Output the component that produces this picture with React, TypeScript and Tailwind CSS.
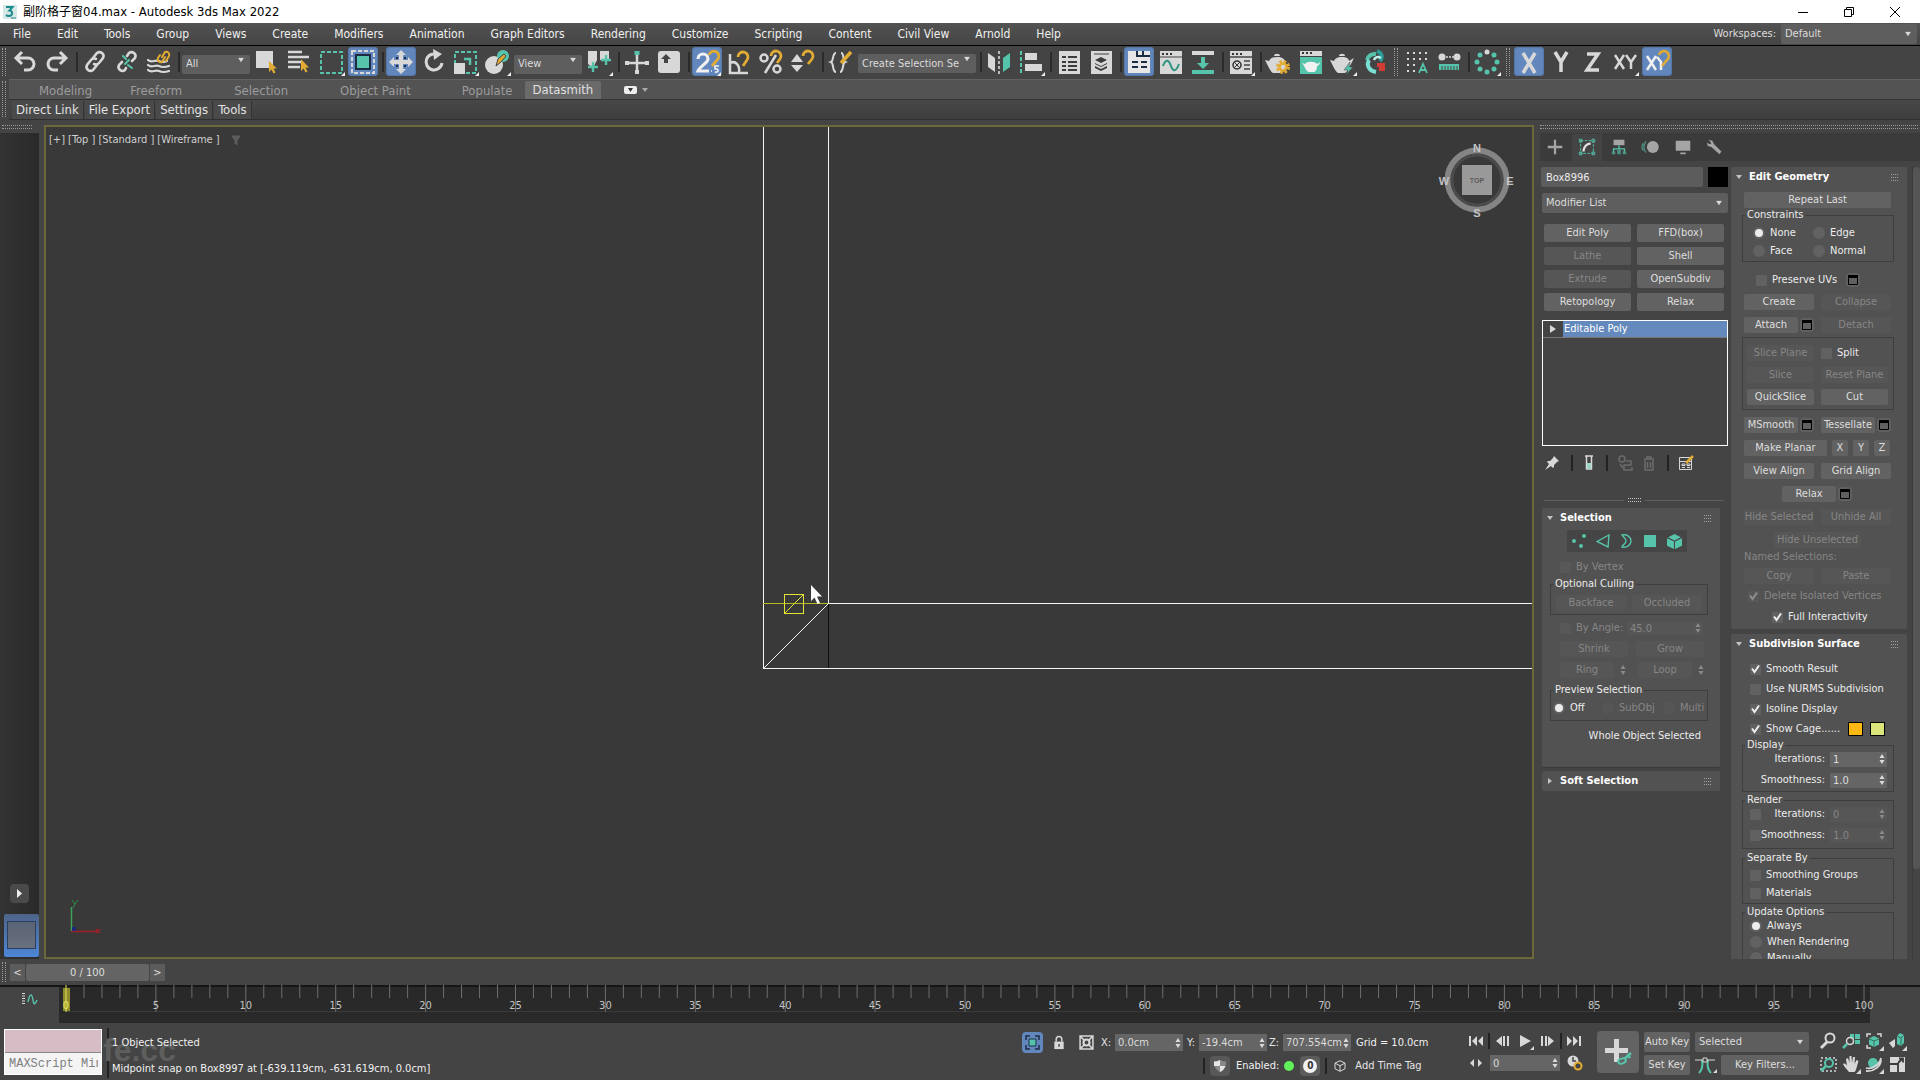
import type { ReactNode } from "react";

const L = "#d8d8d8";
const T = "#56c4ab";
const Y = "#e2ab33";
const B = "#1d2c45";

/* ---------- toolbar icons, drawn on a 30 x 28 grid ---------- */

const icons: Record<string, ReactNode> = {
  undo: <path d="M12 4 6 10l6 6M6.500 10H18a6 6 0 0 1 0 12h-4" fill="none" stroke={L} strokeWidth="3" />,
  redo: <path d="M18 4l6 6-6 6M23.500 10H12a6 6 0 0 0 0 12h4" fill="none" stroke={L} strokeWidth="3" />,
  link: (
    <g fill="none" stroke={L} strokeWidth="2.600" strokeLinecap="round">
      <path d="M13 10l4-5a4 4 0 0 1 6 5l-4 5a4 4 0 0 1-5 1" />
      <path d="M17 17l-4 5a4 4 0 0 1-6-5l4-5a4 4 0 0 1 5-1" />
    </g>
  ),
  unlink: (
    <g fill="none" stroke={L} strokeWidth="2.600" strokeLinecap="round">
      <path d="M15 8l2-3a4 4 0 0 1 6 5l-3 3" />
      <path d="M14 20l-1 2a4 4 0 0 1-6-5l3-3" />
      <path d="M11 8l3 3M16 17l4 3M17 12l-4 4" stroke={T} strokeWidth="2" />
    </g>
  ),
  bind: (
    <g fill="none" strokeLinecap="round">
      <path d="M4 12c4 4 7-1 11 1s6 1 8 0M4 17c4 4 7-1 11 1s7 1 10 0M4 22c4 4 7-1 11 1s7 1 10 0" stroke={L} strokeWidth="2.200" />
      <path d="M18 9l3-5a3 3 0 0 1 4 4l-3 5M21 9l-3 5a3 3 0 0 1-4-4l2-3" stroke={Y} strokeWidth="2" />
    </g>
  ),
  select: (
    <g>
      <path d="M4 3h17v17H4z" fill={L} />
      <path d="M17 13v11l2.500-2.500 2 4 2-1-2-4h3.500z" fill={Y} />
    </g>
  ),
  byname: (
    <g>
      <path d="M4 4h14M4 9h21M4 14h14M4 19h12" stroke={L} strokeWidth="2.600" />
      <path d="M17 11v12l2.500-2.500 2 4 2-1-2-4h3.500z" fill={Y} />
    </g>
  ),
  rect: <path d="M5 4h21v21H5z" fill="none" stroke={T} strokeWidth="2" strokeDasharray="4 2" />,
  window: (
    <g>
      <path d="M4 3h22v22H4z" fill="none" stroke={L} strokeWidth="2" strokeDasharray="4 2" />
      <path d="M8 7h14v14H8z" fill={T} stroke={B} strokeWidth="2" />
    </g>
  ),
  move: (
    <g>
      <path d="M15 2l5 5h-3v5h5V9l5 5-5 5v-3h-5v5h3l-5 5-5-5h3v-5H8v3l-5-5 5-5v3h5V7h-3z" fill={L} />
      <path d="M10 9h2v2h-2zM18 9h2v2h-2zM10 17h2v2h-2zM18 17h2v2h-2z" fill={B} />
    </g>
  ),
  rotate: (
    <g>
      <path d="M20 7a8 8 0 1 0 4 8" fill="none" stroke={L} strokeWidth="3" />
      <path d="M15 1l9 5-8 6z" fill={L} />
    </g>
  ),
  scale: (
    <g>
      <path d="M5 4h21v21H5z" fill="none" stroke={T} strokeWidth="2" strokeDasharray="4 2" />
      <path d="M4 15h11v11H4z" fill={L} />
      <path d="M14 11h6v6" fill="none" stroke={T} strokeWidth="2.500" />
    </g>
  ),
  place: (
    <g>
      <circle cx="12" cy="17" r="9" fill={L} />
      <circle cx="21" cy="8" r="6" fill={T} />
      <path d="M14 18l2-7 6-5 2 2-5 6z" fill={Y} stroke="#444" />
    </g>
  ),
  pivot: (
    <g>
      <path d="M4 3h9v9l-4 8-5-4zM16 3h9v9h-9z" fill={L} />
      <path d="M9 14v10M4 19h10M22 7v10M17 12h10" stroke={T} strokeWidth="2.400" />
    </g>
  ),
  manip: (
    <g>
      <path d="M15 6v19M5 15h20" stroke={L} strokeWidth="2.500" />
      <path d="M3 13h4v4H3zM23 13h4v4h-4zM13 22h4v4h-4z" fill={L} />
      <path d="M12.500 3h5v4h-5z" fill={T} />
    </g>
  ),
  keyb: (
    <g>
      <rect x="4" y="3" width="22" height="22" rx="3" fill={L} />
      <path d="M12 6l5 5h-3v4h-4v-4H7z" fill="#444" />
    </g>
  ),
  snap: (
    <g>
      <path d="M6 11a5 5 0 0 1 10 0c0 4-8 7-10 12h11" fill="none" stroke="#f0f0f0" strokeWidth="3.200" />
      <path d="M17 7a5 5 0 1 1 8 5l-5 6" fill="none" stroke={Y} strokeWidth="2.800" />
      <path d="M27 18h-4v3c4-1 4 4 0 3M19 23h1" fill="none" stroke="#f0f0f0" strokeWidth="1.600" />
    </g>
  ),
  angle: (
    <g fill="none">
      <path d="M6 6v19h18M6 15c6-3 10 3 9 9" stroke={L} strokeWidth="2.500" />
      <path d="M14 9a5 5 0 1 1 9 3l-4 6" stroke={Y} strokeWidth="2.800" />
    </g>
  ),
  percent: (
    <g fill="none">
      <circle cx="8" cy="10" r="3.500" stroke={L} strokeWidth="2.500" />
      <circle cx="21" cy="21" r="3.500" stroke={L} strokeWidth="2.500" />
      <path d="M20 7L9 25" stroke={L} strokeWidth="2.500" />
      <path d="M15 8a5 5 0 1 1 9 3l-3 4" stroke={Y} strokeWidth="2.800" />
    </g>
  ),
  spin: (
    <g>
      <path d="M9 6l6 8H3zM9 24l6-7H3z" fill={L} />
      <path d="M15 8a5 5 0 1 1 9 3l-4 5" fill="none" stroke={Y} strokeWidth="2.800" />
    </g>
  ),
  sets: (
    <g fill="none">
      <path d="M10 5c-4 0-2 8-5 9 3 1 1 10 5 10M15 5c4 0 1 8 4 9-3 1-1 10-5 10" stroke={L} strokeWidth="2" />
      <path d="M25 4L15 15" stroke={Y} strokeWidth="3.500" />
    </g>
  ),
  mirror: (
    <g>
      <path d="M4 5l7 5v14l-7-5z" fill={L} />
      <path d="M26 5l-7 5v14l7-5z" fill={T} />
      <path d="M15 3v23" stroke={L} strokeWidth="1.600" strokeDasharray="3 2" />
    </g>
  ),
  align: (
    <g>
      <path d="M5 3v23" stroke={T} strokeWidth="2" strokeDasharray="4 2" />
      <path d="M9 5h12v7H9zM9 16h17v7H9z" fill={L} />
    </g>
  ),
  layers: (
    <g>
      <path d="M5 3h21v23H5z" fill={L} />
      <path d="M8 9h4M14 9h9M8 14h4M14 14h9M8 18h4M14 18h9M8 22h4M14 22h9" stroke="#3c3c3c" strokeWidth="2" />
    </g>
  ),
  layerx: (
    <g>
      <path d="M5 3h21v23H5z" fill={L} />
      <path d="M8 6h15" stroke="#3c3c3c" />
      <path d="M15 9l6 3-6 3-6-3zM9 16l6 3 6-3v-1l-6 3-6-3zM9 20l6 3 6-3v-2l-6 3-6-3z" fill="#3c3c3c" />
    </g>
  ),
  ribbon: (
    <g>
      <path d="M4 3h22v22H4z" fill="#e6e6e6" />
      <path d="M13 3v5h13M19 3v5M8 14h6M17 14h6M8 19h6M17 19h6" fill="none" stroke={B} strokeWidth="2" />
    </g>
  ),
  curve: (
    <g>
      <path d="M4 3h22v23H4z" fill={L} />
      <path d="M6 5h2v2H6zM10 5h2v2h-2zM14 5h2v2h-2z" fill="#333" />
      <path d="M4 9h22" stroke="#444" />
      <path d="M7 18c3-8 6-6 8 0s5 6 8-2" fill="none" stroke="#2d9580" strokeWidth="2" />
    </g>
  ),
  schem: (
    <g>
      <path d="M4 3h22v4H4z" fill={L} />
      <path d="M4 22h22v4H4zM13 9h4v6h4l-6 6-6-6h4z" fill={T} />
    </g>
  ),
  mat: (
    <g>
      <path d="M4 3h22v23H4z" fill={L} />
      <path d="M6 5h2v2H6zM10 5h2v2h-2zM14 5h2v2h-2z" fill="#333" />
      <path d="M4 9h22M18 13h6M18 17h6M18 21h6" stroke="#444" strokeWidth="1.500" />
      <circle cx="11" cy="17" r="4" fill="none" stroke="#333" strokeWidth="1.500" />
      <path d="M8 14l6 6M14 14l-6 6" stroke="#333" />
    </g>
  ),
  rsetup: (
    <g>
      <path d="M5 14c0-3 3-5 8-5s8 2 8 5 0 9-3 11H9c-2-1-4-5-6-9l-2-4 4 1z M10 8c0-3 6-3 6 0z" fill={L} />
      <circle cx="19" cy="19" r="5.500" fill="none" stroke={Y} strokeWidth="3" strokeDasharray="2.600 1.720" />
      <circle cx="19" cy="19" r="3.500" fill="#d8d8d8" stroke={Y} strokeWidth="2.500" />
    </g>
  ),
  rframe: (
    <g>
      <path d="M4 3h22v5H4z" fill={L} />
      <path d="M6 4h2v2H6zM10 4h2v2h-2zM14 4h2v2h-2z" fill="#333" />
      <path d="M4 9h22v17H4z" fill={T} />
      <path d="M9 16c2-3 10-3 12 0l3-2-1 3-2 1c0 4-2 6-3 6h-5c-3 0-4-6-7-9z" fill="#f2f2f2" />
    </g>
  ),
  render: (
    <g>
      <path d="M6 14c0-3 3-5 8-5s7 2 7 4l5-3-3 6c-2 3-3 7-6 9h-7c-2-1-4-5-6-9l-2-4 4 1z M11 8c0-3 6-3 6 0z" fill={L} />
      <path d="M22 14l-6 8h4l-2 5 7-8h-4z" fill={T} stroke="#444" strokeWidth=".5" />
    </g>
  ),
  cloud: (
    <g fill="none" strokeWidth="4">
      <path d="M7 12a8 8 0 0 1 9-6" stroke={T} />
      <path d="M17 3c5 2 6 6 3 10" stroke="#2a9d97" />
      <path d="M9 12c-3 5 0 11 7 12" stroke="#7be0d4" />
      <path d="M14 12c1-3 4-4 7-2" stroke="#bff1ea" strokeWidth="2.500" />
      <path d="M17 17h6v4h-4" stroke="#d33c33" />
    </g>
  ),
  array: (
    <g>
      <path d="M5 5h2M11 5h2M17 5h2M23 5h2M5 11h2M11 11h2M17 11h2M23 11h2M5 17h2M11 17h2M5 23h2M11 23h2" stroke={L} strokeWidth="2" />
      <path d="M17 25l4-9 4 9M18.500 22h5" fill="none" stroke={T} strokeWidth="1.800" />
    </g>
  ),
  measure: (
    <g>
      <circle cx="8" cy="9" r="3.500" fill={L} />
      <circle cx="23" cy="9" r="3.500" fill={L} />
      <path d="M12 9h8" stroke={L} strokeDasharray="2 1" strokeWidth="1.500" />
      <path d="M5 16h20v6H5z" fill={T} />
      <path d="M8 18v4M11 18v4M14 18v4M17 18v4M20 18v4M23 18v4" stroke="#444" />
    </g>
  ),
  ring: (
    <g fill={T}>
      <circle cx="15" cy="4" r="2.500" fill={L} />
      <circle cx="22" cy="7" r="2.500" />
      <circle cx="25" cy="14" r="2.500" />
      <circle cx="22" cy="21" r="2.500" />
      <circle cx="15" cy="24" r="2.500" />
      <circle cx="8" cy="21" r="2.500" />
      <circle cx="5" cy="14" r="2.500" />
      <circle cx="8" cy="7" r="2.500" />
    </g>
  ),
  axX: <path d="M9 5l12 20M21 5L9 25" stroke={L} strokeWidth="3.500" />,
  axY: <path d="M9 4l6 10 6-10M15 13v11" fill="none" stroke={L} strokeWidth="3.500" />,
  axZ: <path d="M9 6h11L9 22h12" fill="none" stroke={L} strokeWidth="3.500" />,
  axXY: (
    <g fill="none" stroke={L} strokeWidth="2.500">
      <path d="M5 7l9 14M14 7L5 21M16 7l5 7 5-7M21 13v8" />
    </g>
  ),
  axSnap: (
    <g fill="none" stroke="#f0f0f0" strokeWidth="2.500">
      <path d="M5 8l9 14M14 8L5 22M15 9l4 5M19 13v9" />
      <path d="M17 7a5 5 0 1 1 8 5l-5 6" stroke={Y} />
    </g>
  ),
};

function Tool({ n, on, fly }: { n: string; on?: boolean; fly?: boolean }) {
  return (
    <button
      aria-label={n}
      className={
        on
          ? "h-[29px] w-[30px] shrink-0 rounded-sm bg-[#6287bd] shadow-[inset_0_0_1px_1px_#5577aa]"
          : "h-[29px] w-[30px] shrink-0"
      }
    >
      <svg viewBox="0 0 30 28" className="h-[28px] w-[30px]">
        {icons[n]}
        {fly && <path d="M29 24v4h-4z" fill="#f0f0f0" />}
      </svg>
    </button>
  );
}

const Sep = () => <span className="h-[20px] w-[4px] shrink-0 border-r-2 border-[#2a2a2a]" />;

function Grip({ cls }: { cls?: string }) {
  return (
    <span className={`flex w-[8px] shrink-0 justify-center ${cls ?? "h-[28px]"}`}>
      <span className="h-full w-[4px] border-x border-dotted border-[#9a9a9a]" />
    </span>
  );
}

function Drop({ label, value, cls, size }: { label: string; value: string; cls: string; size?: string }) {
  return (
    <div className={`relative shrink-0 ${cls}`}>
      <select
        aria-label={label}
        className={`h-full w-full appearance-none rounded-[2px] bg-[#5e5e5e] pl-[4px] pr-[17px] text-[#dcdcdc] ${size ?? "text-[11px]"}`}
      >
        <option>{value}</option>
      </select>
      <svg viewBox="0 0 8 6" className="pointer-events-none absolute right-[6px] top-1/2 h-[5px] w-[6px] -translate-y-1/2">
        <path d="M0 0h8L4 6z" fill="#d8d8d8" />
      </svg>
    </div>
  );
}

/* ---------- panel controls ---------- */

function Btn({ t, off, cls }: { t: string; off?: boolean; cls?: string }) {
  return (
    <button
      disabled={off}
      className={`flex h-[16px] items-center justify-center whitespace-nowrap rounded-[2px] ${
        off ? "bg-[#565656] text-[#868686]" : "bg-[#626262] text-[#dedede]"
      } ${cls ?? "w-[70px]"}`}
    >
      {t}
    </button>
  );
}

function WinBtn() {
  return (
    <button aria-label="Settings" className="grid h-[14px] w-[14px] shrink-0 place-items-center rounded-sm bg-[#606060]">
      <svg viewBox="0 0 10 10" className="h-[10px] w-[10px]">
        <path d="M.500 .500h9v9h-9z" fill="none" stroke="#000" />
        <path d="M0 0h10v3H0z" fill="#000" />
      </svg>
    </button>
  );
}

function Check({ t, label, on, off, cls }: { t?: string; label?: string; on?: boolean; off?: boolean; cls?: string }) {
  return (
    <label className={`flex items-center gap-[5px] whitespace-nowrap ${off ? "text-[#868686]" : "text-[#ececec]"} ${cls ?? ""}`}>
      <span className="grid h-[11px] w-[11px] shrink-0">
        <input
          type="checkbox"
          aria-label={label}
          defaultChecked={on}
          disabled={off}
          className="peer col-start-1 row-start-1 h-[11px] w-[11px] appearance-none rounded-[1px] bg-[#616161] disabled:bg-[#585858]"
        />
        <svg viewBox="0 0 11 11" className="pointer-events-none col-start-1 row-start-1 hidden h-[11px] w-[11px] peer-checked:block">
          <path d="M2 4.500L4.500 8 9 1.500" fill="none" stroke={off ? "#8f8f8f" : "#eee"} strokeWidth="2" />
        </svg>
      </span>
      {t}
    </label>
  );
}

function Radio({ t, name, on, off, cls }: { t: string; name: string; on?: boolean; off?: boolean; cls?: string }) {
  return (
    <label className={`flex items-center gap-[5px] whitespace-nowrap ${off ? "text-[#868686]" : "text-[#ececec]"} ${cls ?? ""}`}>
      <input
        type="radio"
        name={name}
        defaultChecked={on}
        disabled={off}
        className="h-[12px] w-[12px] shrink-0 appearance-none rounded-full border-2 border-[#626262] bg-[#626262] checked:bg-[#ececec] disabled:border-[#565656] disabled:bg-[#565656]"
      />
      {t}
    </label>
  );
}

function Arrows({ off }: { off?: boolean }) {
  return (
    <svg viewBox="0 0 6 10" className="h-[10px] w-[6px] shrink-0">
      <path d="M3 0l2.500 4h-5zM3 10l2.500-4h-5z" fill={off ? "#8a8a8a" : "#dcdcdc"} />
    </svg>
  );
}

function Spin({ label, v, off, cls }: { label: string; v: string; off?: boolean; cls: string }) {
  return (
    <span className={`flex items-center pr-[2px] ${off ? "bg-[#565656] text-[#868686]" : "bg-[#656565] text-[#dcdcdc]"} ${cls}`}>
      <input aria-label={label} defaultValue={v} disabled={off} className="h-full w-full min-w-0 bg-transparent pl-[3px]" />
      <Arrows off={off} />
    </span>
  );
}

function Group({ t, cls, inner, children }: { t: string; cls: string; inner: string; children: ReactNode }) {
  return (
    <fieldset className={`min-w-0 border border-[#3e3e3e] ${cls}`}>
      <legend className="ml-[2px] px-[2px] leading-[12px] text-[#ececec]">{t}</legend>
      <div className={inner}>{children}</div>
    </fieldset>
  );
}

function Head({ t, closed }: { t: string; closed?: boolean }) {
  return (
    <h2 className="flex h-[20px] items-center text-[11px] font-bold text-white">
      <svg viewBox="0 0 6 6" className="ml-[5px] mr-[7px] h-[6px] w-[6px]">
        <path d={closed ? "M1 0l4 3-4 3z" : "M0 1h6L3 5z"} fill="#c4c4c4" />
      </svg>
      {t}
      <svg viewBox="0 0 8 8" className="ml-auto mr-[8px] h-[8px] w-[8px]" shapeRendering="crispEdges">
        <path d="M0 1.500h8M0 4.500h8M0 7.500h8" stroke="#a0a0a0" strokeDasharray="1 1" />
      </svg>
    </h2>
  );
}

/* ---------- data ---------- */

const menus = ["File", "Edit", "Tools", "Group", "Views", "Create", "Modifiers", "Animation", "Graph Editors", "Rendering", "Customize", "Scripting", "Content", "Civil View", "Arnold", "Help"];

const ribbonTabs: [string, string][] = [
  ["Modeling", "pl-[30px] pr-[18px]"],
  ["Freeform", "pl-[20px] pr-[26px]"],
  ["Selection", "px-[26px]"],
  ["Object Paint", "px-[26px]"],
  ["Populate", "pl-[25px] pr-[12px]"],
];

const modButtons: [string, boolean][] = [
  ["Edit Poly", false], ["FFD(box)", false],
  ["Lathe", true], ["Shell", false],
  ["Extrude", true], ["OpenSubdiv", false],
  ["Retopology", false], ["Relax", false],
];

/* ---------- viewport ---------- */

function Viewport() {
  return (
    <main className="relative mt-[5px] min-w-0 flex-1 overflow-hidden border-2 border-[#6c683a] bg-[#393939]">
      <svg className="absolute inset-0 h-full w-full" shapeRendering="crispEdges">
        <path d="M717.500 0V541.500M782.500 0V476.500" stroke="#f4f4f4" />
        <line x1="782" y1="476.500" x2="100%" y2="476.500" stroke="#f4f4f4" />
        <line x1="717" y1="541.500" x2="100%" y2="541.500" stroke="#f4f4f4" />
        <path d="M782.500 477V541" stroke="#111" />
        <path d="M717.500 541.500l65-65" stroke="#f4f4f4" />
        <path d="M717 476.500h65" stroke="#b5bb22" />
        <path d="M738.500 467.500h19v19h-19zM738.500 486.500l19-19" fill="none" stroke="#e0e632" />
        <path d="M765 458v16l3.500-3.500 3 6.500 2.500-1-3-6.500h5z" fill="#fff" shapeRendering="auto" />
      </svg>

      <div className="absolute left-[3px] top-[5px] flex h-[16px] items-center gap-[3px] text-[11px] text-[#d0d0d0]">
        <button>[+]</button>
        <button>[Top ]</button>
        <button>[Standard ]</button>
        <button>[Wireframe ]</button>
        <svg viewBox="0 0 10 10" className="ml-[8px] h-[11px] w-[10px]">
          <path d="M0 0h10L6.500 5v5l-3-2V5z" fill="#5c5c5c" />
        </svg>
      </div>

      <svg viewBox="0 0 80 80" className="absolute right-[15px] top-[13px] h-[80px] w-[80px]">
        <circle cx="40" cy="40" r="29.500" fill="none" stroke="#858585" strokeWidth="6" />
        <circle cx="40" cy="40" r="25" fill="none" stroke="#4b4b4b" strokeWidth="3" />
        <path d="M25 25h30v30H25z" fill="#999" />
        <g fill="#c4c4c4" fontFamily="Liberation Sans, sans-serif" fontWeight="700" fontSize="11" textAnchor="middle">
          <text x="40" y="12">N</text>
          <text x="40" y="77">S</text>
          <text x="7" y="45">W</text>
          <text x="73" y="45">E</text>
        </g>
        <text x="40" y="43" fill="#5a5a5a" fontFamily="Liberation Sans, sans-serif" fontWeight="700" fontSize="7" textAnchor="middle">TOP</text>
      </svg>

      <svg viewBox="0 0 40 40" className="absolute bottom-[20px] left-[20px] h-[40px] w-[40px]">
        <path d="M5.500 10v24" stroke="#3fa05a" strokeWidth="1.500" />
        <path d="M5 34.500h26M30 32l4 4M34 32l-4 4" stroke="#a02028" strokeWidth="1.500" />
        <path d="M6 3l3 4 3-4M9 7l-2 4" fill="none" stroke="#2f8f45" />
        <path d="M6 30h4v4H6z" fill="#1c2a80" />
      </svg>
    </main>
  );
}

/* ---------- command panel ---------- */

function CommandTabs() {
  const c = "#a5a5a5";
  const art = [
    <path key="c" d="M11 3v16M3 11h16" stroke={c} strokeWidth="2.500" />,
    <g key="m" fill="none" stroke={T}>
      <path d="M4 4h14v14H4z" strokeDasharray="3 1.500" />
      <path d="M2.500 2.500h3v3h-3zM16.500 2.500h3v3h-3zM2.500 16.500h3v3h-3zM16.500 16.500h3v3h-3z" />
      <path d="M7 16c1-6 3-8 8-9" stroke="#e0e0e0" strokeWidth="2.500" />
    </g>,
    <g key="h">
      <path d="M5 3h12v6H5z" fill={c} />
      <path d="M11 9v4M5 17v-4h12v4" fill="none" stroke={T} strokeWidth="1.500" />
      <path d="M3 16h4v3H3zM15 16h4v3h-4zM9 14h4v5H9z" fill="#4d8f80" />
    </g>,
    <g key="o">
      <circle cx="13" cy="11" r="6.500" fill={c} />
      <path d="M5.500 5a9 9 0 0 0 0 12M2.500 7a7 7 0 0 0 0 8" fill="none" stroke="#4d8f80" strokeWidth="1.500" />
    </g>,
    <g key="d" fill={c}>
      <path d="M3 4h16v11H3zM8 17h6v2H8z" />
    </g>,
    <path key="u" d="M4 3l4 1 2 4 8 8-2 3-9-8-4-1-1-4 3 2 2-1z" fill={c} />,
  ];
  return (
    <div role="tablist" className="flex h-[28px] items-center gap-[2px] bg-[#3b3b3b]">
      {art.map((a, i) => (
        <button key={i} role="tab" aria-selected={i === 1} className={`grid h-[27px] w-[30px] place-items-center ${i === 1 ? "bg-[#444]" : ""}`}>
          <svg viewBox="0 0 22 22" className="h-[20px] w-[20px]">{a}</svg>
        </button>
      ))}
    </div>
  );
}

function ColumnA() {
  return (
    <div className="w-[188px] shrink-0 text-[11px] leading-[14px] text-[#dedede]">
      <div className="flex justify-between pl-[1px]">
        <input aria-label="Object name" defaultValue="Box8996" className="h-[20px] w-[162px] rounded-[2px] bg-[#5c5c5c] pl-[5px] text-[#ececec]" />
        <button aria-label="Object color" className="h-[20px] w-[20px] bg-black" />
      </div>
      <Drop label="Modifier List" value="Modifier List" cls="ml-[2px] mt-[6px] h-[20px]" />
      <div className="ml-[4px] mr-[4px] mt-[11px] grid grid-cols-2 gap-x-[6px] gap-y-[5px]">
        {modButtons.map(([t, off]) => <Btn key={t} t={t} off={off} cls="h-[18px]" />)}
      </div>
      <div className="ml-[2px] mt-[9px] h-[126px] border border-white bg-[#444]">
        <div className="flex h-[17px] items-center border-b border-[#777]">
          <svg viewBox="0 0 6 8" className="mx-[7px] h-[8px] w-[6px]"><path d="M0 0l6 4-6 4z" fill="#d8d8d8" /></svg>
          <span className="flex h-[16px] flex-1 items-center bg-[#6489bc] pl-[1px] text-white">Editable Poly</span>
        </div>
      </div>
      <div className="mt-[7px] flex h-[20px] items-center">
        <svg viewBox="0 0 16 16" className="ml-[4px] h-[16px] w-[16px]">
          <path d="M10 1l5 5-2 1-3 3v2l-1 1-2-2-6 4 4-6-2-2 1-1h2l3-3z" fill={L} />
        </svg>
        <span className="ml-[11px] h-[16px] border-l-2 border-[#222]" />
        <svg viewBox="0 0 8 16" className="ml-[12px] h-[16px] w-[8px]">
          <path d="M0 1h8M1.500 1v13h5V1" fill="none" stroke={L} strokeWidth="1.500" />
          <path d="M2 8h4v6H2z" fill="#9fd8c8" />
        </svg>
        <span className="ml-[13px] h-[16px] border-l-2 border-[#222]" />
        <svg viewBox="0 0 16 16" className="ml-[9px] h-[16px] w-[16px]" fill="none" stroke="#6b6b6b" strokeWidth="1.500">
          <circle cx="5" cy="4" r="3" /><path d="M9 6h5v4H7v5h8v-3M3 9l3 4" />
        </svg>
        <svg viewBox="0 0 12 16" className="ml-[10px] h-[16px] w-[12px]" fill="none" stroke="#6b6b6b" strokeWidth="1.500">
          <path d="M1 4h10M4 4V2h4v2M2 5v10h8V5M4.500 7v6M7.500 7v6" />
        </svg>
        <span className="ml-[12px] h-[16px] border-l-2 border-[#222]" />
        <svg viewBox="0 0 16 16" className="ml-[9px] h-[16px] w-[16px]">
          <path d="M1.500 2.500h12v12h-12zM1.500 6.500h12M4 9h3v1.500H4zM9 9h3v1.500H9zM4 12.500h3M9 12.500h3" fill="none" stroke={L} />
          <path d="M15 1L8 8" stroke={Y} strokeWidth="2.500" />
        </svg>
      </div>
      <div className="ml-[4px] mr-[4px] mt-[24px] flex h-[6px] items-center gap-[4px]">
        <span className="h-px flex-1 bg-[#5e5e5e]" />
        <span className="h-[4px] w-[13px] border-y border-dotted border-[#c4c4c4]" />
        <span className="h-px flex-1 bg-[#5e5e5e]" />
      </div>

      <section className="ml-[2px] mr-[8px] mt-[5px] rounded-[2px] border-b border-[#3a3a3a] bg-[#525252] pb-[23px]">
        <Head t="Selection" />
        <div className="ml-[25px] mt-[2px] flex h-[22px] w-[120px] items-center justify-around bg-[#454545]">
          <svg viewBox="0 0 14 14" className="h-[14px] w-[14px]" fill={T}><circle cx="2" cy="7" r="2" /><circle cx="12" cy="2" r="2" /><circle cx="9" cy="12" r="2" /></svg>
          <svg viewBox="0 0 14 14" className="h-[14px] w-[14px]"><path d="M1 7.500L13 1l-1 12z" fill="none" stroke={T} strokeWidth="1.400" /></svg>
          <svg viewBox="0 0 14 14" className="h-[14px] w-[14px]"><path d="M3 1c5-1 9 2 9 6s-4 7-9 6c0-2 4-3 4-6S4 3 3 1z" fill="none" stroke={T} strokeWidth="1.400" /></svg>
          <svg viewBox="0 0 14 14" className="h-[14px] w-[14px]"><path d="M1 1h12v12H1z" fill={T} /></svg>
          <svg viewBox="0 0 14 14" className="h-[15px] w-[15px]"><path d="M7 0l6 3-6 3-6-3zM0 4l6.500 3v7L0 11zM14 4L7.500 7v7l6.500-3z" fill={T} /></svg>
        </div>
        <Check t="By Vertex" off cls="ml-[18px] mt-[7px] h-[16px]" />
        <Group t="Optional Culling" cls="ml-[8px] mr-[12px] mt-[3px]" inner="flex gap-[6px] pb-[3px] pl-[5px] pt-[5px]">
          <Btn t="Backface" off />
          <Btn t="Occluded" off />
        </Group>
        <div className="ml-[18px] mt-[5px] flex h-[16px] items-center gap-[3px]">
          <Check t="By Angle:" off cls="w-[64px]" />
          <Spin label="Angle" v="45.0" off cls="h-[13px] w-[76px]" />
        </div>
        <div className="ml-[18px] mt-[5px] flex gap-[8px]">
          <Btn t="Shrink" off cls="w-[68px]" />
          <Btn t="Grow" off cls="w-[68px]" />
        </div>
        <div className="ml-[18px] mt-[5px] flex items-center">
          <Btn t="Ring" off cls="w-[54px]" />
          <span className="ml-[6px]"><Arrows off /></span>
          <Btn t="Loop" off cls="ml-[12px] w-[54px]" />
          <span className="ml-[6px]"><Arrows off /></span>
        </div>
        <Group t="Preview Selection" cls="ml-[8px] mr-[12px] mt-[6px]" inner="flex items-center pb-[4px] pl-[2px] pt-[4px]">
          <Radio t="Off" name="prev" on cls="h-[16px] w-[49px]" />
          <Radio t="SubObj" name="prev" off cls="h-[16px] w-[61px]" />
          <Radio t="Multi" name="prev" off cls="h-[16px]" />
        </Group>
        <p className="mr-[19px] mt-[7px] h-[16px] text-right leading-[16px] text-[#ececec]">Whole Object Selected</p>
      </section>
      <section className="ml-[2px] mr-[8px] mt-[3px] rounded-[2px] bg-[#525252]">
        <Head t="Soft Selection" closed />
      </section>
    </div>
  );
}

function ColumnB() {
  return (
    <div className="ml-[3px] w-[176px] shrink-0 text-[11px] leading-[14px] text-[#ececec]">
      <section className="rounded-[2px] bg-[#525252] pb-[4px]">
        <Head t="Edit Geometry" />
        <Btn t="Repeat Last" cls="ml-[13px] mt-[5px] w-[147px]" />
        <Group t="Constraints" cls="ml-[11px] mr-[13px] mt-[1px]" inner="grid grid-cols-[60px_1fr] pb-[1px] pl-[10px] pt-[3px]">
          <Radio t="None" name="con" on cls="h-[18px]" />
          <Radio t="Edge" name="con" cls="h-[18px]" />
          <Radio t="Face" name="con" cls="h-[18px]" />
          <Radio t="Normal" name="con" cls="h-[18px]" />
        </Group>
        <div className="ml-[25px] mt-[9px] flex h-[18px] items-center gap-[9px]">
          <Check t="Preserve UVs" />
          <WinBtn />
        </div>
        <div className="ml-[13px] mt-[5px] flex gap-[7px]">
          <Btn t="Create" />
          <Btn t="Collapse" off />
        </div>
        <div className="ml-[13px] mt-[7px] flex items-center">
          <Btn t="Attach" cls="w-[54px]" />
          <span className="ml-[2px] mr-[7px]"><WinBtn /></span>
          <Btn t="Detach" off />
        </div>
        <div className="ml-[11px] mr-[13px] mt-[4px] grid grid-cols-2 gap-x-[7px] gap-y-[6px] border border-[#3e3e3e] pb-[4px] pl-[4px] pr-[5px] pt-[7px]">
          <Btn t="Slice Plane" off cls="" />
          <Check t="Split" />
          <Btn t="Slice" off cls="" />
          <Btn t="Reset Plane" off cls="" />
          <Btn t="QuickSlice" cls="" />
          <Btn t="Cut" cls="" />
        </div>
        <div className="ml-[13px] mt-[7px] flex flex-col gap-[7px]">
          <div className="flex items-center">
            <Btn t="MSmooth" cls="w-[54px]" />
            <span className="ml-[2px] mr-[7px]"><WinBtn /></span>
            <Btn t="Tessellate" cls="w-[54px]" />
            <span className="ml-[2px]"><WinBtn /></span>
          </div>
          <div className="flex gap-[5px]">
            <Btn t="Make Planar" cls="w-[83px]" />
            <Btn t="X" cls="w-[16px]" />
            <Btn t="Y" cls="w-[16px]" />
            <Btn t="Z" cls="w-[16px]" />
          </div>
          <div className="flex gap-[7px]">
            <Btn t="View Align" />
            <Btn t="Grid Align" />
          </div>
          <div className="flex items-center gap-[2px] pl-[38px]">
            <Btn t="Relax" cls="w-[54px]" />
            <WinBtn />
          </div>
          <div className="flex gap-[7px]">
            <Btn t="Hide Selected" off />
            <Btn t="Unhide All" off />
          </div>
          <Btn t="Hide Unselected" off cls="ml-[30px] w-[87px]" />
        </div>
        <p className="ml-[13px] mt-[2px] text-[#868686]">Named Selections:</p>
        <div className="ml-[13px] mt-[4px] flex gap-[7px]">
          <Btn t="Copy" off />
          <Btn t="Paste" off />
        </div>
        <Check t="Delete Isolated Vertices" on off cls="ml-[17px] mt-[4px] h-[16px]" />
        <Check t="Full Interactivity" on cls="ml-[41px] mt-[5px] h-[16px]" />
      </section>

      <section className="mt-[5px] rounded-t-[2px] bg-[#525252]">
        <Head t="Subdivision Surface" />
        <div className="pl-[19px] pt-[5px]">
          <Check t="Smooth Result" on cls="h-[20px]" />
          <Check t="Use NURMS Subdivision" cls="h-[20px]" />
          <Check t="Isoline Display" on cls="h-[20px]" />
          <div className="flex h-[20px] items-center">
            <Check t="Show Cage......" on cls="w-[98px]" />
            <button aria-label="Cage color" className="h-[14px] w-[15px] border border-black bg-[#fdb813]" />
            <button aria-label="Selected cage color" className="ml-[7px] h-[14px] w-[15px] border border-black bg-[#dce47c]" />
          </div>
        </div>
        <Group t="Display" cls="ml-[11px] mr-[13px]" inner="pb-[3px] pr-[6px]">
          <div className="flex h-[16px] items-center justify-end gap-[5px]">Iterations:<Spin label="Display iterations" v="1" cls="h-[15px] w-[57px]" /></div>
          <div className="mt-[5px] flex h-[16px] items-center justify-end gap-[5px]">Smoothness:<Spin label="Display smoothness" v="1.0" cls="h-[15px] w-[57px]" /></div>
        </Group>
        <Group t="Render" cls="ml-[11px] mr-[13px] mt-[2px]" inner="pb-[5px] pl-[7px] pr-[6px]">
          <div className="flex h-[16px] items-center gap-[5px]"><Check label="Use render iterations" /><span className="ml-auto">Iterations:</span><Spin label="Render iterations" v="0" off cls="h-[15px] w-[57px] shrink-0" /></div>
          <div className="mt-[5px] flex h-[16px] items-center gap-[5px]"><span className="w-[6px]"><Check label="Use render smoothness" /></span><span className="ml-auto">Smoothness:</span><Spin label="Render smoothness" v="1.0" off cls="h-[15px] w-[57px] shrink-0" /></div>
        </Group>
        <Group t="Separate By" cls="ml-[11px] mr-[13px] mt-[3px]" inner="pb-[1px] pl-[7px] pt-[2px]">
          <Check t="Smoothing Groups" cls="h-[18px]" />
          <Check t="Materials" cls="h-[18px]" />
        </Group>
        <Group t="Update Options" cls="ml-[11px] mr-[13px] mt-[2px]" inner="pl-[7px]">
          <Radio t="Always" name="upd" on cls="h-[16px]" />
          <Radio t="When Rendering" name="upd" cls="h-[16px]" />
          <Radio t="Manually" name="upd" cls="h-[16px]" />
        </Group>
      </section>
    </div>
  );
}

/* ---------- timeline ---------- */

function Timeline() {
  return (
    <div className="flex h-[38px] shrink-0 border-t-2 border-[#161616]">
      <button aria-label="Mini curve editor" className="grid w-[59px] shrink-0 place-items-center pb-[12px]">
        <svg viewBox="0 0 16 12" className="h-[12px] w-[16px]">
          <path d="M1.500 0v12" stroke={L} strokeWidth="3" strokeDasharray="1 1.500" />
          <path d="M6 9c2-10 4-8 5-2s2 4 4 0" fill="none" stroke={T} strokeWidth="1.400" />
        </svg>
      </button>
      <div className="mr-[50px] min-w-0 flex-1 bg-[#292929] pl-[7px] pr-[6px]">
        <svg className="block h-full w-full overflow-visible text-[11px]">
          <line x1="0" x2="100%" y1="24.500" y2="24.500" stroke="#3a3a3a" />
          <rect x="-3" y="1" width="7" height="23" fill="#8e8c2c" />
          {Array.from({ length: 101 }, (_, i) => (
            <line key={i} x1={`${i}%`} x2={`${i}%`} y1="-2" y2={i % 5 ? 11 : 25} stroke={i ? "#6e6e6e" : "#dfe05a"} />
          ))}
          {Array.from({ length: 21 }, (_, i) => (
            <text key={i} x={`${i * 5}%`} y="22" textAnchor="middle" fill={i ? "#c4c4c4" : "#e9e96a"}>{i * 5}</text>
          ))}
        </svg>
      </div>
    </div>
  );
}

/* ---------- status bar ---------- */

function Pb({ label, d, fly }: { label: string; d: string; fly?: boolean }) {
  return (
    <button aria-label={label} className="h-[20px] w-[20px]">
      <svg viewBox="0 0 20 20" className="h-[20px] w-[20px]">
        <path d={d} fill={L} />
        {fly && <path d="M19 15v4h-4z" fill={L} />}
      </svg>
    </button>
  );
}

const nav: [string, ReactNode, boolean][] = [
  ["Zoom", <g key="0" fill="none" stroke={L}><circle cx="12" cy="7" r="4.500" strokeWidth="2" /><path d="M9 11l-6 6" strokeWidth="3" /></g>, false],
  ["Zoom All", <g key="1"><path d="M9 3h4v5H9zM14 3h5v5h-5zM9 9h4v4H9zM14 9h5v4h-5z" fill={T} /><circle cx="9" cy="10" r="3.500" fill="#444" stroke={L} strokeWidth="1.500" /><path d="M6 13l-4 4" stroke={T} strokeWidth="2.500" /></g>, false],
  ["Zoom Extents", <g key="2"><path d="M3 6V3h4M13 3h4v3M3 14v3h4" fill="none" stroke={L} strokeWidth="1.500" /><path d="M10 5l5 2.500v6L10 16l-5-2.500v-6z" fill={T} /><path d="M5 8l5 2 5-2M10 10v6" fill="none" stroke="#35705f" /></g>, true],
  ["Zoom Extents All", <g key="3"><path d="M10 5l3-3 4 2v8l-3 3-4-2z" fill={T} /><path d="M2 12l6-4v7l-2 2z" fill={L} /><path d="M10 5l4 2v8M14 7l3-3" fill="none" stroke="#35705f" /></g>, true],
  ["Zoom Region", <g key="4" fill="none"><path d="M3 4h15v13H3z" stroke={L} strokeWidth="1.500" strokeDasharray="2 2" /><circle cx="11" cy="9" r="4" stroke={T} strokeWidth="2" /><path d="M8 12l-5 5" stroke={T} strokeWidth="2.500" /></g>, false],
  ["Pan", <path key="5" d="M8 18c-2-3-5-5-6-8 2-1 3 0 4 2L5 5l2-1 1.500 5V2h2l.5 7 1-6h2l-.5 7 2-4 2 1-2 7c-.5 2-1 3-2 4z" fill={L} />, true],
  ["Orbit", <g key="6" fill="none"><circle cx="9" cy="9" r="5" fill={T} /><path d="M2 14c6 2 14-4 15-10M2 17c8 1 15-5 15-11" stroke={L} strokeWidth="1.800" /></g>, true],
  ["Maximize Viewport", <g key="7"><path d="M3 3h15v15H3z" fill={L} /><path d="M3 10h8v8M11 9l5-5M12 4.500h4v4" fill="none" stroke="#3a3a3a" strokeWidth="1.800" /></g>, false],
];

function Coord({ a, v }: { a: string; v: string }) {
  return (
    <div className="flex w-[84px] items-center justify-between text-[#e4e4e4]">
      <span className="w-[12px] text-right">{a}:</span>
      <Spin label={a} v={v} cls="h-[17px] w-[68px]" />
    </div>
  );
}

function Status() {
  return (
    <footer className="flex h-[57px] shrink-0 items-start pr-[13px] text-[11px] leading-[14px]">
      <div className="ml-[4px] mt-[6px] h-[46px] w-[98px] shrink-0 border border-white bg-[#e9e9e9]">
        <div className="h-[22px] bg-[#d6bcc4]" />
        <input
          aria-label="MAXScript listener"
          defaultValue="MAXScript Mini"
          className="block h-[22px] w-full border-t border-[#888] bg-[#f4f4f4] pl-[4px] pr-[3px] font-['Liberation_Mono',monospace] text-[12px] text-[#808080]"
        />
      </div>
      <div className="relative ml-[5px] mt-[5px] h-[50px] min-w-0 flex-1 border-l-2 border-[#222]">
        <span className="pointer-events-none absolute left-[-6px] top-[4px] font-['Liberation_Sans',sans-serif] text-[32px] font-bold leading-[36px] text-[#5e5e5e]">fe.cc</span>
        <p className="relative pl-[3px] pt-[8px] text-[#f0f0f0]">1 Object Selected</p>
        <p className="relative mt-[12px] whitespace-nowrap pl-[3px] text-[#f0f0f0]">Midpoint snap on Box8997 at [-639.119cm, -631.619cm, 0.0cm]</p>
      </div>

      <div className="w-[444px] shrink-0">
        <div className="mt-[9px] flex h-[21px] items-center">
          <button aria-label="Isolate selection" className="h-[21px] w-[21px] rounded-sm bg-[#6287bd]">
            <svg viewBox="0 0 21 21" className="h-[21px] w-[21px]">
              <path d="M4 8V4h4M13 4h4v4M17 13v4h-4M8 17H4v-4" fill="none" stroke={B} strokeWidth="1.500" />
              <path d="M7 7h7v7H7z" fill={T} stroke={B} />
            </svg>
          </button>
          <svg viewBox="0 0 12 16" className="ml-[10px] h-[15px] w-[12px]">
            <path d="M3 7V4.500a3 3 0 0 1 6 0V7" fill="none" stroke={L} strokeWidth="1.600" />
            <path d="M1 7h10v8H1z" fill={L} />
            <path d="M5.300 9.500h1.500v3H5.300z" fill="#444" />
          </svg>
          <svg viewBox="0 0 14 14" className="ml-[14px] h-[15px] w-[15px]">
            <path d="M1 1h12v12H1zM1 1l4 4M13 1L9 5M1 13l4-4M13 13L9 9" fill="none" stroke={L} strokeWidth="1.400" />
            <circle cx="7" cy="7" r="2.800" fill="none" stroke={L} strokeWidth="2" />
          </svg>
          <div className="ml-[5px] flex text-[#e4e4e4]">
            <Coord a="X" v="0.0cm" />
            <Coord a="Y" v="-19.4cm" />
            <Coord a="Z" v="707.554cm" />
          </div>
          <span className="ml-[5px] whitespace-nowrap text-[#f0f0f0]">Grid = 10.0cm</span>
        </div>
        <div className="ml-[181px] mt-[3px] flex h-[20px] items-center">
          <span className="h-[16px] border-l-2 border-[#222]" />
          <button aria-label="Security" className="ml-[5px] grid h-[20px] w-[20px] place-items-center rounded-sm bg-[#585858]">
            <svg viewBox="0 0 12 12" className="h-[12px] w-[12px]">
              <path d="M0 1.500C2 1.500 4 1 6 0c2 1 4 1.500 6 1.500C12 7 10 10 6 12 2 10 0 7 0 1.500z" fill="#8a8a8a" />
              <path d="M6 0v6H0V1.500C2 1.500 4 1 6 0zM6 6h5.500C10 9 9 11 6 12z" fill="#e6e6e6" />
            </svg>
          </button>
          <span className="ml-[6px] text-[#f0f0f0]">Enabled:</span>
          <span className="ml-[5px] h-[10px] w-[10px] rounded-full bg-[#5ff05a]" />
          <button className="ml-[6px] grid h-[20px] w-[20px] place-items-center rounded-sm bg-[#5c5c5c]">
            <span className="grid h-[14px] w-[14px] place-items-center rounded-full bg-[#f2f2f2] text-[10px] font-bold leading-none text-[#333]">0</span>
          </button>
          <span className="ml-[5px] h-[16px] border-l-2 border-[#222]" />
          <svg viewBox="0 0 12 12" className="ml-[7px] h-[12px] w-[12px]">
            <path d="M6 .700l5 2.500v5.600l-5 2.500-5-2.500V3.200zM1 3.200l5 2.500 5-2.500M6 5.700v5.600" fill="none" stroke={L} />
          </svg>
          <span className="ml-[9px] whitespace-nowrap text-[#e4e4e4]">Add Time Tag</span>
        </div>
      </div>

      <div className="w-[118px] shrink-0 pt-[8px]">
        <div className="flex h-[20px] items-center justify-between">
          <Pb label="Go to start" d="M3 5h2v10H3zM11 5v10l-5-5zM17 5v10l-5-5z" />
          <span className="h-[16px] border-l-2 border-[#222]" />
          <Pb label="Previous frame" d="M9 5v10l-6-5zM10 5h2v10h-2zM14 5h2v10h-2z" />
          <Pb label="Play" d="M5 4l11 6-11 6z" fly />
          <Pb label="Next frame" d="M4 5h2v10H4zM8 5h2v10H8zM11 5v10l6-5z" />
          <span className="h-[16px] border-l-2 border-[#222]" />
          <Pb label="Go to end" d="M3 5v10l5-5zM9 5v10l5-5zM15 5h2v10h-2z" />
        </div>
        <div className="mt-[2px] flex h-[20px] items-center justify-between">
          <Pb label="Key mode" d="M8 6v8l-4-4zM12 6v8l4-4z" />
          <Spin label="Frame" v="0" cls="h-[16px] w-[70px]" />
          <button aria-label="Time configuration" className="h-[20px] w-[20px]">
            <svg viewBox="0 0 20 20" className="h-[20px] w-[20px]">
              <circle cx="9" cy="8" r="5.500" fill={L} />
              <path d="M9 4v4h3" fill="none" stroke="#444" strokeWidth="1.500" />
              <circle cx="14" cy="13" r="3.500" fill="#444" stroke={Y} strokeWidth="2" />
            </svg>
          </button>
        </div>
      </div>

      <button aria-label="Set key" className="ml-[13px] mt-[8px] h-[42px] w-[42px] shrink-0 rounded-sm bg-[#636363]">
        <svg viewBox="0 0 42 42" className="h-[42px] w-[42px]">
          <path d="M17 8h5v9h9v5h-9v9h-5v-9H8v-5h9z" fill={L} />
          <path d="M34 22l-8 7M31 24l2 3" fill="none" stroke={T} strokeWidth="2.500" />
          <ellipse cx="25" cy="30" rx="4" ry="2.500" fill="#636363" stroke={T} strokeWidth="2" transform="rotate(-20 25 30)" />
        </svg>
      </button>
      <div className="ml-[5px] mt-[9px] flex w-[46px] shrink-0 flex-col gap-[3px] text-[#dedede]">
        <button className="h-[20px] whitespace-nowrap rounded-[2px] bg-[#626262]">Auto Key</button>
        <button className="h-[20px] whitespace-nowrap rounded-[2px] bg-[#626262]">Set Key</button>
      </div>
      <div className="ml-[5px] mt-[9px] flex w-[114px] shrink-0 flex-col gap-[3px] text-[#dedede]">
        <Drop label="Key set" value="Selected" cls="h-[20px]" />
        <div className="flex items-center justify-between">
          <svg viewBox="0 0 22 18" className="h-[18px] w-[22px]">
            <path d="M4 17c4-4 4-8 3-13M16 17c-4-4-4-8-3-13" fill="none" stroke={T} strokeWidth="2" />
            <path d="M0 4h20" stroke={L} />
            <path d="M8 2h4v4H8z" fill="#444" stroke={L} />
            <path d="M22 13v4h-4z" fill={L} />
          </svg>
          <button className="h-[20px] w-[88px] rounded-[2px] bg-[#626262]">Key Filters...</button>
        </div>
      </div>
      <div className="ml-[9px] mt-[8px] grid shrink-0 grid-cols-4 gap-x-[3px] gap-y-[3px]">
        {nav.map(([t, art, fly]) => (
          <button key={t} aria-label={t} className="h-[20px] w-[20px]">
            <svg viewBox="0 0 20 20" className="h-[20px] w-[20px]">
              {art}
              {fly && <path d="M20 15v5h-5z" fill={L} />}
            </svg>
          </button>
        ))}
      </div>
    </footer>
  );
}

/* ---------- page ---------- */

export default function App() {
  return (
    <div className="flex h-screen flex-col overflow-hidden bg-[#444] font-['DejaVu_Sans_Condensed','Noto_Sans_CJK_SC',sans-serif] text-[#e0e0e0]">
      <header className="flex h-[23px] shrink-0 items-center bg-white pl-[3px] text-[13px] leading-[20px] text-black">
        <svg viewBox="0 0 14 14" className="h-[14px] w-[14px]">
          <path d="M0 0h14v14H0z" fill="#d5e8e6" />
          <path d="M3 2h6.500L6.500 5.500C10 5.500 10 11 6 11 4.500 11 3.500 10.500 3 10" fill="none" stroke="#1b8a8c" strokeWidth="2" />
          <path d="M8 13h5" stroke="#1b8a8c" />
        </svg>
        <h1 className="ml-[6px] flex items-baseline whitespace-nowrap">
          <span className="text-[12px]">副阶格子窗</span>04.max - Autodesk 3ds Max 2022
        </h1>
        <div className="ml-auto mr-[2px] flex">
          <button aria-label="Minimize" className="grid h-[20px] w-[46px] place-items-center">
            <svg viewBox="0 0 10 10" className="h-[10px] w-[10px]"><path d="M0 5.500h10" stroke="#000" /></svg>
          </button>
          <button aria-label="Restore" className="grid h-[20px] w-[46px] place-items-center">
            <svg viewBox="0 0 10 10" className="h-[10px] w-[10px]"><path d="M.500 2.500h7v7h-7zM2.500 2.500v-2h7v7h-2" fill="none" stroke="#000" /></svg>
          </button>
          <button aria-label="Close" className="grid h-[20px] w-[46px] place-items-center">
            <svg viewBox="0 0 10 10" className="h-[10px] w-[10px]"><path d="M0 0l10 10M10 0L0 10" stroke="#000" /></svg>
          </button>
        </div>
      </header>

      <nav className="flex h-[23px] shrink-0 items-center border-b border-black bg-linear-to-b from-[#525252] to-[#454545] text-[12px] leading-[16px] text-[#f0f0f0]">
        {menus.map((m) => <button key={m} className="whitespace-nowrap px-[13px]">{m}</button>)}
        <div className="ml-auto mr-[3px] flex items-center gap-[5px] text-[11px] text-[#dcdcdc]">
          <span>Workspaces:</span>
          <Drop label="Workspaces" value="Default" cls="h-[20px] w-[136px]" />
        </div>
      </nav>

      <div className="flex h-[33px] shrink-0 items-center gap-[2px] pb-[2px]">
        <Grip />
        <Tool n="undo" /><Tool n="redo" /><Sep />
        <Tool n="link" /><Tool n="unlink" /><Tool n="bind" /><Sep />
        <Drop label="Selection filter" value="All" cls="mb-[4px] h-[19px] w-[68px]" />
        <Tool n="select" /><Tool n="byname" /><Tool n="rect" fly /><Tool n="window" on /><Sep />
        <Tool n="move" on /><Tool n="rotate" /><Tool n="scale" fly /><Tool n="place" fly />
        <Drop label="Reference coordinate system" value="View" cls="mb-[4px] h-[19px] w-[68px]" />
        <Tool n="pivot" fly /><Sep />
        <Tool n="manip" /><Tool n="keyb" /><Sep />
        <Tool n="snap" on fly /><Tool n="angle" /><Tool n="percent" /><Tool n="spin" /><Sep />
        <Tool n="sets" />
        <Drop label="Named selection sets" value="Create Selection Set" cls="mb-[5px] h-[19px] w-[118px]" />
        <Sep />
        <Tool n="mirror" /><Tool n="align" fly /><Sep />
        <Tool n="layers" /><Tool n="layerx" /><Sep />
        <Tool n="ribbon" on /><Tool n="curve" /><Tool n="schem" /><Sep />
        <Tool n="mat" fly /><Sep />
        <Tool n="rsetup" /><Tool n="rframe" /><Tool n="render" fly /><Tool n="cloud" />
        <Grip />
        <Tool n="array" /><Tool n="measure" /><Sep />
        <Tool n="ring" fly />
        <Grip />
        <Tool n="axX" on /><Tool n="axY" /><Tool n="axZ" /><Tool n="axXY" fly /><Tool n="axSnap" on />
      </div>

      <div className="flex shrink-0 text-[13px] leading-[16px]">
        <Grip cls="mr-px h-[38px] pt-[2px]" />
        <div className="min-w-0 flex-1">
          <div className="flex h-[21px] items-end border-b border-t border-b-[#333] border-t-[#626262] bg-[#535353] text-[#9c9c9c]">
            {ribbonTabs.map(([t, pad]) => <button key={t} className={`whitespace-nowrap ${pad}`}>{t}</button>)}
            <button className="h-[18px] whitespace-nowrap rounded-t-[2px] bg-[#6a6a6a] px-[8px] text-[#e0e0e0]">Datasmith</button>
            <button aria-label="Ribbon display" className="mb-[5px] ml-[23px] flex items-center gap-[5px]">
              <svg viewBox="0 0 13 8" className="h-[8px] w-[13px]"><rect width="13" height="8" rx="2" fill="#eee" /><path d="M4 2h5L6.500 6z" fill="#333" /></svg>
              <svg viewBox="0 0 6 4" className="h-[4px] w-[6px]"><path d="M0 0h6L3 4z" fill="#aaa" /></svg>
            </button>
          </div>
          <div className="flex h-[20px] items-center gap-px border-b border-[#303030] bg-linear-to-b from-[#484848] to-[#3e3e3e] pl-[3px] text-[#e2e2e2]">
            {["Direct Link", "File Export", "Settings", "Tools"].map((t) => (
              <button key={t} className="h-[18px] whitespace-nowrap border-r border-[#343434] bg-[#4a4a4a] px-[4px]">{t}</button>
            ))}
          </div>
        </div>
      </div>

      <div className="flex min-h-0 flex-1">
        <aside className="flex w-[44px] shrink-0 flex-col">
          <div className="flex h-[13px] items-center pl-[2px]">
            <span className="h-[4px] w-[30px] border-y border-dotted border-[#9a9a9a]" />
          </div>
          <div className="flex w-[39px] flex-1 flex-col justify-end bg-linear-to-r from-[#333] to-[#2a2a2a] pb-[2px]">
            <button aria-label="Expand" className="mb-[11px] ml-[10px] grid h-[19px] w-[19px] place-items-center rounded-sm bg-[#4a4a4a]">
              <svg viewBox="0 0 5 9" className="h-[9px] w-[5px]"><path d="M0 0l5 4.500L0 9z" fill="#eee" /></svg>
            </button>
            <button aria-label="Viewport layout" className="ml-[4px] h-[43px] rounded-[2px] bg-linear-to-b from-[#4d6488] to-[#4c86d6] px-[3px] pb-[8px] pt-[7px]">
              <span className="block h-full border border-[#2b3f60] bg-linear-to-b from-[#5a6373] to-[#6a7080]" />
            </button>
          </div>
        </aside>

        <Viewport />

        <aside className="ml-[6px] flex w-[380px] shrink-0 flex-col">
          <div className="flex h-[13px] items-center pr-[2px]">
            <span className="h-[4px] w-full border-y border-dotted border-[#9a9a9a]" />
          </div>
          <CommandTabs />
          <div className="flex min-h-0 flex-1 overflow-hidden pt-[6px]">
            <ColumnA />
            <ColumnB />
            <div className="ml-auto w-[8px] border-l border-[#3a3a3a]">
              <div className="h-[702px] rounded-sm bg-[#555]" />
            </div>
          </div>
        </aside>
      </div>

      <div className="flex h-[26px] shrink-0 items-center gap-px text-[11px] text-[#dedede]">
        <Grip cls="mr-px h-[20px]" />
        <button className="h-[17px] w-[15px] bg-[#5c5c5c] leading-[17px]">&lt;</button>
        <button className="h-[17px] w-[123px] rounded-[2px] bg-[#646464] leading-[17px]">0 / 100</button>
        <button className="h-[17px] w-[15px] bg-[#5c5c5c] leading-[17px]">&gt;</button>
      </div>
      <Timeline />
      <Status />
    </div>
  );
}
